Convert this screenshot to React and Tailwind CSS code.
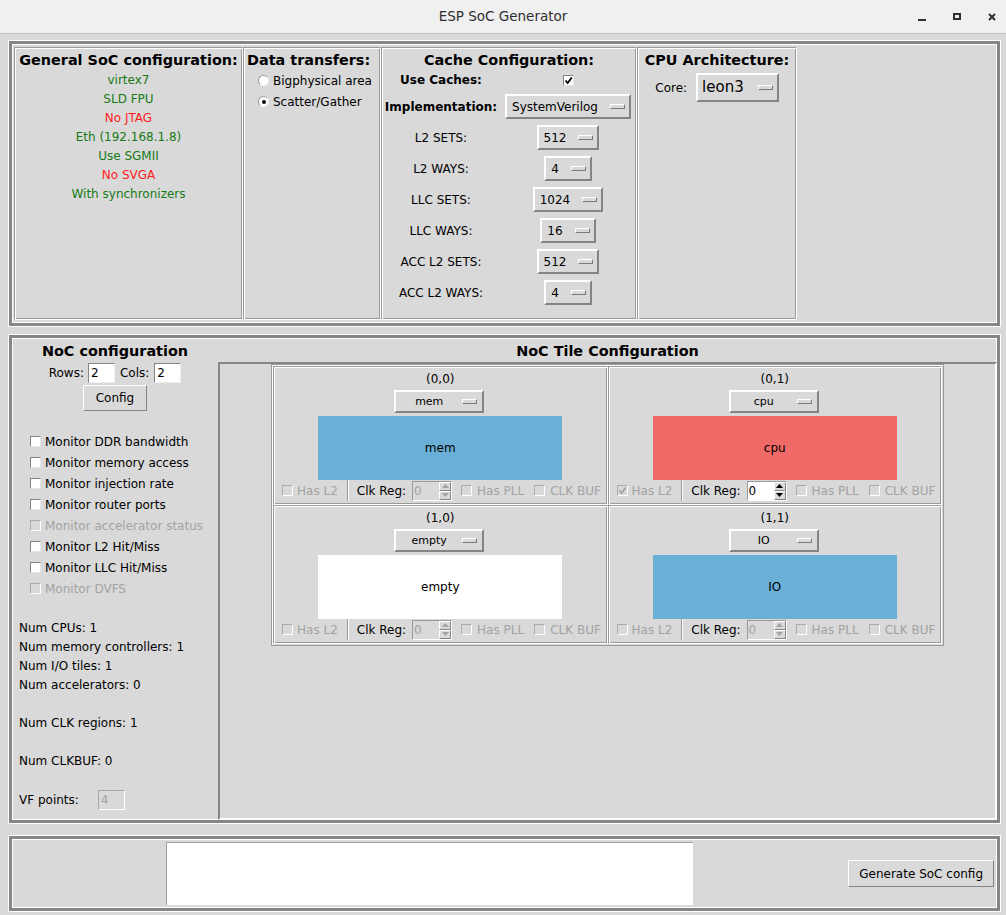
import React from "react";

const GROOVE =
  "border border-t-[#9a9a9a] border-l-[#9a9a9a] border-r-white border-b-white shadow-[inset_1px_1px_0_#fff,inset_-1px_-1px_0_#9a9a9a]";
const RAISED2 =
  "border-2 border-t-white border-l-white border-r-[#848484] border-b-[#848484]";
const RAISED1 =
  "border border-t-white border-l-white border-r-[#848484] border-b-[#848484]";

function Ind() {
  return (
    <span className="block w-[15px] h-[5px] shrink-0 border border-t-white border-l-white border-r-[#7a7a7a] border-b-[#7a7a7a]" />
  );
}

function Drop({ children, className = "" }) {
  return (
    <div
      className={
        "flex items-center h-[25px] pl-[5px] pr-[4px] gap-[12px] " +
        RAISED2 +
        " " +
        className
      }
    >
      <span className="leading-none">{children}</span>
      <Ind />
    </div>
  );
}

function Check({ checked = false, disabled = false, className = "" }) {
  const box = disabled
    ? "bg-[#d9d9d9] border border-t-[#ababab] border-l-[#ababab] border-r-white border-b-white"
    : "bg-white border border-t-[#848484] border-l-[#848484] border-r-[#e6e6e6] border-b-[#e6e6e6]";
  return (
    <span
      className={
        "relative block w-[11px] h-[11px] shrink-0 " + box + " " + className
      }
    >
      {checked && (
        <svg
          className="absolute left-[0px] top-[0px]"
          width="9"
          height="9"
          viewBox="0 0 9 9"
        >
          <path
            d="M1.5 4.5 L3.6 7 L7.8 1.5"
            fill="none"
            stroke={disabled ? "#a3a3a3" : "#000"}
            strokeWidth="1.8"
          />
        </svg>
      )}
    </span>
  );
}

function Radio({ selected, label }) {
  return (
    <div className="h-[21px] flex items-center pl-[11px]">
      <span className="w-[11px] h-[11px] rounded-full bg-white border border-t-[#9a9a9a] border-l-[#9a9a9a] border-r-[#eeeeee] border-b-[#eeeeee] flex items-center justify-center">
        {selected && (
          <span className="block w-[4px] h-[4px] rounded-full bg-black" />
        )}
      </span>
      <span className="ml-[4px]">{label}</span>
    </div>
  );
}

function Entry({ value, disabled = false, className = "" }) {
  return (
    <span
      className={
        "block h-[20px] pl-[2px] leading-[18px] border border-t-[#848484] border-l-[#848484] border-r-[#eeeeee] border-b-[#eeeeee] " +
        (disabled ? "bg-[#d9d9d9] text-[#a3a3a3]" : "bg-white") +
        " " +
        className
      }
    >
      {value}
    </span>
  );
}

function Arrow({ up, color }) {
  return (
    <div
      className={
        "flex-1 flex items-center justify-center bg-[#d9d9d9] " + RAISED1
      }
    >
      <svg width="7" height="4" viewBox="0 0 7 4">
        <path d={up ? "M0 4 L3.5 0 L7 4Z" : "M0 0 L3.5 4 L7 0Z"} fill={color} />
      </svg>
    </div>
  );
}

function Spin({ enabled }) {
  return (
    <div
      className={
        "ml-[6px] w-[40px] h-[20px] flex border border-t-[#9a9a9a] border-l-[#9a9a9a] border-r-white border-b-white " +
        (enabled ? "bg-white" : "bg-[#d9d9d9]")
      }
    >
      <span
        className={
          "flex-1 pl-[1px] leading-[18px] " +
          (enabled ? "text-black" : "text-[#a3a3a3]")
        }
      >
        0
      </span>
      <div className="w-[12px] flex flex-col">
        <Arrow up color={enabled ? "#000" : "#a3a3a3"} />
        <Arrow color={enabled ? "#000" : "#a3a3a3"} />
      </div>
    </div>
  );
}

function Tile({ pos, type, color, enabled = false, l2 = false }) {
  return (
    <div className={"h-[139px] flex flex-col items-center pt-[1px] " + GROOVE}>
      <div className="h-[20px] leading-[22px]">{pos}</div>
      <div
        className={
          "mt-[2px] w-[90px] h-[23px] flex items-center pr-[5px] -translate-x-[1px] " +
          RAISED2
        }
      >
        <span className="flex-1 text-center text-[11px] leading-none">
          {type}
        </span>
        <Ind />
      </div>
      <div
        className={
          "mt-[3px] w-[244px] h-[64px] flex items-center justify-center " +
          color
        }
      >
        {type}
      </div>
      <div className="self-stretch h-[21px] flex items-center">
        <div className="h-full flex items-center pl-[8px] pr-[9px] border-r border-[#9a9a9a] shadow-[1px_0_0_#fff]">
          <Check disabled checked={l2} />
          <span className="ml-[4px] text-[#a3a3a3]">Has L2</span>
        </div>
        <span className="ml-[9px]">Clk Reg:</span>
        <Spin enabled={enabled} />
        <Check disabled className="ml-[9px]" />
        <span className="ml-[5px] text-[#a3a3a3]">Has PLL</span>
        <Check disabled className="ml-[10px]" />
        <span className="ml-[5px] text-[#a3a3a3]">CLK BUF</span>
      </div>
    </div>
  );
}

function TitleBar() {
  return (
    <div className="h-[34px] bg-[#f0f0f0] border-b border-[#c2c2c2] grid grid-cols-[1fr_auto_1fr] items-center">
      <div />
      <div className="text-[13.5px] text-[#2e2e2e]">ESP SoC Generator</div>
      <div className="flex justify-end items-center pr-[10px]">
        <span className="block mt-[6px] w-[8px] h-[2px] bg-[#2e2e2e]" />
        <span className="block ml-[27px] w-[8px] h-[7px] border-2 border-[#2e2e2e]" />
        <svg className="ml-[27px]" width="8" height="8" viewBox="0 0 8 8">
          <path d="M1 1 L7 7 M7 1 L1 7" stroke="#2e2e2e" strokeWidth="2" />
        </svg>
      </div>
    </div>
  );
}

const FRAME =
  "w-[991px] border-[3px] border-[#868686] shadow-[0_0_0_1px_#fff,inset_0_0_0_1px_#fff]";

function TopFrame() {
  const general = [
    ["virtex7", "text-[#177a17]"],
    ["SLD FPU", "text-[#177a17]"],
    ["No JTAG", "text-[#ff1c1c]"],
    ["Eth (192.168.1.8)", "text-[#177a17]"],
    ["Use SGMII", "text-[#177a17]"],
    ["No SVGA", "text-[#ff1c1c]"],
    ["With synchronizers", "text-[#177a17]"],
  ];
  const cache = [
    ["L2 SETS:", "512"],
    ["L2 WAYS:", "4"],
    ["LLC SETS:", "1024"],
    ["LLC WAYS:", "16"],
    ["ACC L2 SETS:", "512"],
    ["ACC L2 WAYS:", "4"],
  ];
  return (
    <div className={"mt-[7px] h-[285px] flex pl-[2px] pt-[3px] " + FRAME}>
      <div className={"w-[229px] h-[273px] flex flex-col items-center pt-[3px] " + GROOVE}>
        <div className="text-[14.4px] font-bold leading-[18px]">
          General SoC configuration:
        </div>
        <div className="mt-[2px] flex flex-col items-center">
          {general.map(([t, c]) => (
            <div key={t} className={"leading-[19px] " + c}>
              {t}
            </div>
          ))}
        </div>
      </div>
      <div className={"w-[138px] h-[273px] flex flex-col pt-[3px] pl-[3px] " + GROOVE}>
        <div className="text-[14.4px] font-bold leading-[18px]">
          Data transfers:
        </div>
        <div className="mt-[1px]">
          <Radio label="Bigphysical area" />
          <Radio selected label="Scatter/Gather" />
        </div>
      </div>
      <div className={"w-[256px] h-[273px] flex flex-col pt-[3px] " + GROOVE}>
        <div className="text-[14.4px] font-bold leading-[18px] text-center">
          Cache Configuration:
        </div>
        <div className="grid grid-cols-[118px_1fr]">
          <div className="h-[22px] flex items-center justify-center font-bold">
            Use Caches:
          </div>
          <div className="h-[22px] flex items-center justify-center">
            <Check checked />
          </div>
          <div className="h-[31px] flex items-center justify-center font-bold">
            Implementation:
          </div>
          <div className="h-[31px] flex items-center justify-center">
            <Drop>SystemVerilog</Drop>
          </div>
          {cache.map(([l, v]) => (
            <React.Fragment key={l}>
              <div className="h-[31px] flex items-center justify-center">
                {l}
              </div>
              <div className="h-[31px] flex items-center justify-center">
                <Drop>{v}</Drop>
              </div>
            </React.Fragment>
          ))}
        </div>
      </div>
      <div className={"w-[160px] h-[273px] flex flex-col pt-[3px] " + GROOVE}>
        <div className="text-[14.4px] font-bold leading-[18px] text-center">
          CPU Architecture:
        </div>
        <div className="mt-[4px] flex justify-center items-center">
          <span>Core:</span>
          <div
            className={
              "ml-[9px] h-[29px] flex items-center pl-[4px] pr-[4px] gap-[14px] " +
              RAISED2
            }
          >
            <span className="text-[15px] leading-none">leon3</span>
            <Ind />
          </div>
        </div>
      </div>
    </div>
  );
}

function NocFrame() {
  const monitors = [
    ["Monitor DDR bandwidth", false],
    ["Monitor memory access", false],
    ["Monitor injection rate", false],
    ["Monitor router ports", false],
    ["Monitor accelerator status", true],
    ["Monitor L2 Hit/Miss", false],
    ["Monitor LLC Hit/Miss", false],
    ["Monitor DVFS", true],
  ];
  const stats = [
    "Num CPUs: 1",
    "Num memory controllers: 1",
    "Num I/O tiles: 1",
    "Num accelerators: 0",
    "",
    "Num CLK regions: 1",
    "",
    "Num CLKBUF: 0",
    "",
  ];
  return (
    <div className={"mt-[9px] h-[488px] flex " + FRAME}>
      <div className="w-[206px] shrink-0 flex flex-col pt-[4px]">
        <div className="text-[14.4px] font-bold leading-[19px] text-center">
          NoC configuration
        </div>
        <div className="mt-[2px] h-[20px] flex justify-center items-center">
          <span>Rows:</span>
          <Entry value="2" className="ml-[4px] w-[27px]" />
          <span className="ml-[5px]">Cols:</span>
          <Entry value="2" className="ml-[5px] w-[27px]" />
        </div>
        <div
          className={
            "mt-[2px] self-center h-[26px] w-[64px] flex items-center justify-center " +
            RAISED1
          }
        >
          Config
        </div>
        <div className="mt-[20px] pl-[18px]">
          {monitors.map(([t, d]) => (
            <div key={t} className="h-[21px] flex items-center">
              <Check disabled={d} />
              <span className={"ml-[4px] " + (d ? "text-[#a3a3a3]" : "")}>
                {t}
              </span>
            </div>
          ))}
        </div>
        <div className="mt-[20px] pl-[7px]">
          {stats.map((s, i) => (
            <div key={i} className="h-[19px] leading-[19px]">
              {s}
            </div>
          ))}
          <div className="h-[19px] flex items-center">
            <span>VF points:</span>
            <Entry
              value="4"
              disabled
              className="ml-[19px] w-[27px] h-[19px] leading-[17px] border-t-[#a8a8a8] border-l-[#a8a8a8] border-r-white border-b-white"
            />
          </div>
        </div>
      </div>
      <div className="flex-1 flex flex-col">
        <div className="h-[24px] pt-[3px] flex items-center justify-center text-[14.4px] font-bold">
          NoC Tile Configuration
        </div>
        <div className="flex-1 flex justify-center items-start border-t-2 border-l-2 border-t-[#868686] border-l-[#868686] border-r-2 border-b-2 border-r-white border-b-white">
          <div className="w-[673px] grid grid-cols-2 p-[1px] border border-[#9a9a9a] shadow-[inset_1px_1px_0_#fff]">
            <Tile pos="(0,0)" type="mem" color="bg-[#6aafd6]" />
            <Tile pos="(0,1)" type="cpu" color="bg-[#f06a68]" enabled l2 />
            <Tile pos="(1,0)" type="empty" color="bg-white" />
            <Tile pos="(1,1)" type="IO" color="bg-[#6aafd6]" />
          </div>
        </div>
      </div>
    </div>
  );
}

function BottomFrame() {
  return (
    <div className={"mt-[13px] h-[75px] flex items-center " + FRAME}>
      <div className="ml-[154px] w-[527px] h-[63px] bg-white border-t border-l border-[#a0a0a0]" />
      <div
        className={
          "ml-auto mr-[3px] h-[27px] px-[10px] flex items-center " + RAISED1
        }
      >
        Generate SoC config
      </div>
    </div>
  );
}

export default function App() {
  return (
    <div className="w-[1006px] h-[915px] overflow-hidden bg-[#d9d9d9] text-black font-['DejaVu_Sans',sans-serif] text-[12px]">
      <TitleBar />
      <div className="pl-[9px]">
        <TopFrame />
        <NocFrame />
        <BottomFrame />
      </div>
    </div>
  );
}
